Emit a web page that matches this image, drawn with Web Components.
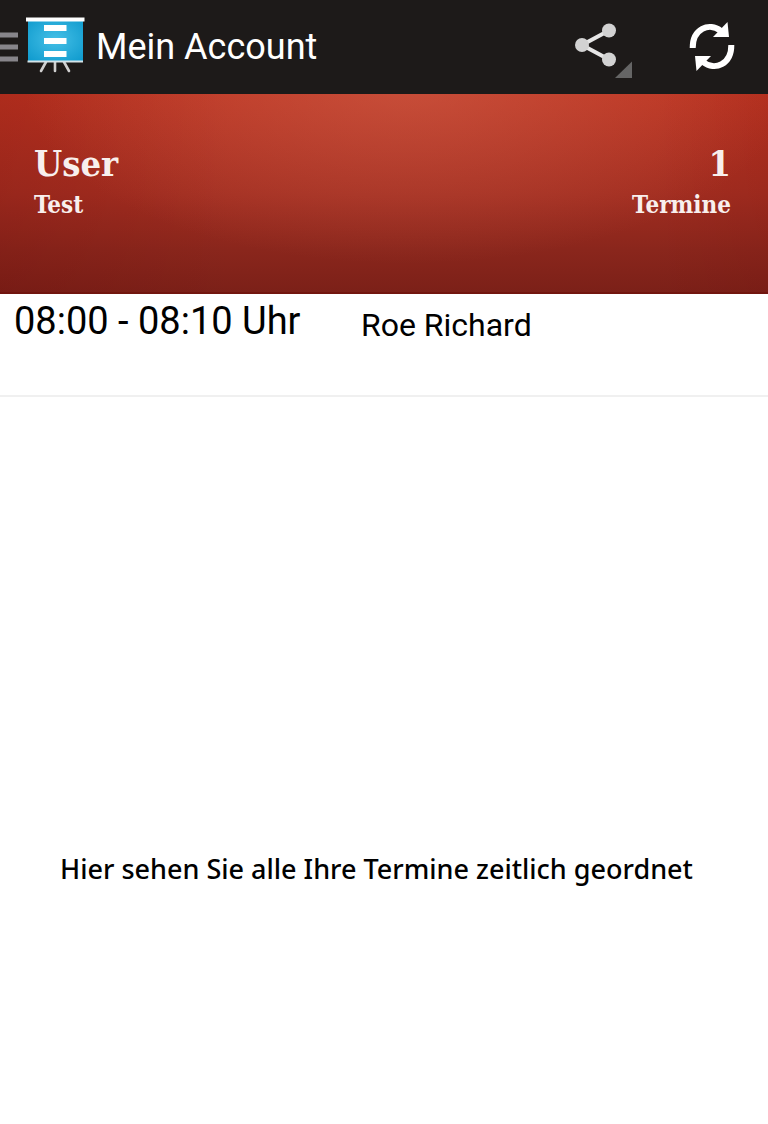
<!DOCTYPE html>
<html lang="de">
<head>
<meta charset="utf-8">
<meta name="viewport" content="width=device-width, initial-scale=1">
<title>Mein Account</title>
<style>
  body { margin: 0; background: #fff; color: #000; font-family: Roboto, sans-serif; }
</style>
</head>
<body>
<account-page>
  <app-bar slot="bar">Mein Account</app-bar>
  <account-banner slot="banner">
    <span slot="name">User</span>
    <span slot="detail">Test</span>
    <span slot="count">1</span>
    <span slot="unit">Termine</span>
  </account-banner>
  <appointment-row>
    <span slot="time">08:00 - 08:10 Uhr</span>
    <span slot="person">Roe Richard</span>
  </appointment-row>
  <page-hint slot="hint">Hier sehen Sie alle Ihre Termine zeitlich geordnet</page-hint>
</account-page>

<script>
const define = (name, html) => {
  const template = document.createElement('template');
  template.innerHTML = html;
  customElements.define(name, class extends HTMLElement {
    constructor() {
      super();
      this.attachShadow({ mode: 'open' }).append(template.content.cloneNode(true));
    }
  });
};

define('account-page', `
  <style>
    :host { display: flex; flex-direction: column; min-height: 100vh; }
    main { flex: 1; display: flex; flex-direction: column; }
    .hint { flex: 1; display: grid; grid-template-rows: 65fr auto 34fr; }
    .hint slot { display: block; grid-row: 2; }
  </style>
  <slot name="bar"></slot>
  <slot name="banner"></slot>
  <main>
    <slot></slot>
    <div class="hint"><slot name="hint"></slot></div>
  </main>`);

define('app-bar', `
  <style>
    :host { display: block; background: #1d1a19; color: #fff; }
    header { display: flex; align-items: center; height: 94px; padding-right: 28px; }
    h1 { flex: 1; margin: 0; font-size: 36px; line-height: 44px; font-weight: 400; }
    button { display: block; padding: 0; border: 0; background: none; color: inherit; }
    svg { display: block; }
    .home { margin-right: 8px; }
    .share { margin-right: 48px; }
  </style>
  <header>
    <button class="home" aria-label="Menü">
      <svg width="88" height="94" viewBox="0 0 88 94">
        <defs>
          <radialGradient id="board" cx=".5" cy=".45" r=".75">
            <stop offset="0" stop-color="#45bfe6"/><stop offset="1" stop-color="#0b98cc"/>
          </radialGradient>
        </defs>
        <path fill="#87858a" d="M0 32.500h18v5H0zM0 44.500h18v5H0zM0 56.500h18v5H0z"/>
        <path d="M46 62l-5 9M55 62v9M64 62l5 9" stroke="#cfcfcf" stroke-width="2.600" stroke-linecap="round"/>
        <path fill="url(#board)" d="M28 21h55v41H28z"/>
        <path fill="#fff" d="M26 17.500h58.500v4H26zM44 25h22.500v6H44zM44 38h22.500v6H44zM44 51h22.500v6H44z"/>
        <path fill="#d5e3e8" d="M27.500 60.500h55.500v2H27.500z"/>
      </svg>
    </button>
    <h1><slot></slot></h1>
    <button class="share" aria-label="Teilen">
      <svg width="60" height="94" viewBox="572 0 60 94">
        <path d="M609 30.500L582 45l27 14.500" fill="none" stroke="#e6e6e6" stroke-width="4"/>
        <g fill="#d2d2d2"><circle cx="609" cy="30.500" r="7"/><circle cx="582" cy="45" r="7"/><circle cx="609" cy="59.500" r="7"/></g>
        <path fill="#656565" d="M632 61.500V78h-17z"/>
      </svg>
    </button>
    <button aria-label="Aktualisieren">
      <svg width="60" height="94" viewBox="680 0 60 94">
        <g id="arrow">
          <path d="M692.700 48C692.500 29 709 21.500 721 31" fill="none" stroke="#fff" stroke-width="6"/>
          <path fill="#fff" d="M727.500 22L729 37 713 37z"/>
        </g>
        <use href="#arrow" transform="rotate(180 712 46.500)"/>
      </svg>
    </button>
  </header>`);

define('account-banner', `
  <style>
    :host {
      display: block; color: #f8efed;
      font-family: "DejaVu Serif Condensed", "DejaVu Serif", serif; font-weight: 700;
      background:
        radial-gradient(ellipse 50% 90% at 53% -5%, #d8705870, #d0502800),
        linear-gradient(90deg, #60000026, #60000000 30%, #60000000 85%, #60000018),
        linear-gradient(180deg, #bb3321 0%, #a22d20 50%, #8a261c 78%, #7b2018 100%);
    }
    section {
      display: flex; justify-content: space-between; box-sizing: border-box;
      height: 200px; padding: 47px 37px 0 34px; border-bottom: 2px solid #6d100a99;
    }
    div { display: flex; flex-direction: column; }
    .right { align-items: flex-end; }
    .big { font-size: 36px; line-height: 44px; }
    .small { font-size: 24px; line-height: 40px; }
  </style>
  <section>
    <div>
      <span class="big"><slot name="name"></slot></span>
      <span class="small"><slot name="detail"></slot></span>
    </div>
    <div class="right">
      <span class="big"><slot name="count"></slot></span>
      <span class="small"><slot name="unit"></slot></span>
    </div>
  </section>`);

define('appointment-row', `
  <style>
    :host { display: block; border-bottom: 2px solid #f0f0f0; }
    article { display: grid; grid-template-columns: 47% 1fr; align-items: start; height: 101px; }
    .time { padding: 5px 0 0 14px; font-size: 38px; line-height: 44px; }
    .person { padding-top: 9px; font-size: 32px; line-height: 44px; }
  </style>
  <article>
    <span class="time"><slot name="time"></slot></span>
    <span class="person"><slot name="person"></slot></span>
  </article>`);

define('page-hint', `
  <style>
    :host { display: block; }
    p { margin: 0; padding: 0 60px; font-family: "Noto Sans", sans-serif; font-size: 27px; line-height: 36px; font-weight: 500; }
  </style>
  <p><slot></slot></p>`);
</script>
</body>
</html>
